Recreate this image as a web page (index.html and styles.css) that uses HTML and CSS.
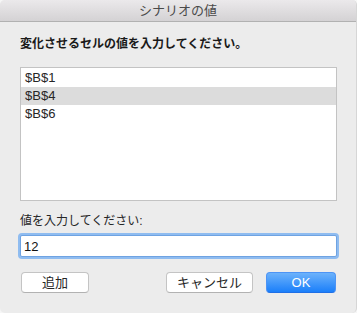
FILE: index.html
```html
<!DOCTYPE html>
<html lang="ja">
<head>
    <meta charset="UTF-8">
    <title>シナリオの値</title>
    <link rel="stylesheet" href="styles.css">
</head>
<body>
    <div class="window">
        <div class="title-bar">シナリオの値</div>

        <div class="content">
            <div class="prompt">変化させるセルの値を入力してください。</div>

            <div class="cell-list">
                <div class="cell-row">$B$1</div>
                <div class="cell-row selected">$B$4</div>
                <div class="cell-row">$B$6</div>
            </div>

            <div class="value-label">値を入力してください:</div>
            <input class="value-input" type="text" value="12">

            <div class="button-row">
                <button class="btn">追加</button>
                <div class="spacer"></div>
                <button class="btn btn-cancel">キャンセル</button>
                <button class="btn btn-ok">OK</button>
            </div>
        </div>
    </div>
</body>
</html>
```

FILE: styles.css
```css
body {
    margin: 0;
    padding: 0;
    background: #f6f6f6;
    font-family: 'Liberation Sans', 'Noto Sans CJK JP', sans-serif;
}

.window {
    width: 357px;
    height: 313px;
    background: #ececec;
    border-radius: 5px;
    overflow: hidden;
    box-sizing: border-box;
    border-right: 1px solid #d6d6d6;
}

.title-bar {
    height: 21px;
    line-height: 21px;
    text-align: center;
    font-size: 13px;
    color: #4a4a4a;
    background: linear-gradient(#ebe9eb, #d4d2d4);
    border-bottom: 1px solid #b1b1b1;
}

.content {
    padding: 0 20px;
}

.prompt {
    margin-top: 14px;
    font-size: 12px;
    line-height: 16px;
    font-weight: 700;
    color: #1a1a1a;
}

.cell-list {
    margin-top: 15px;
    width: 317px;
    height: 134px;
    box-sizing: border-box;
    border: 1px solid #c3c3c3;
    background: white;
    padding-top: 1px;
}

.cell-row {
    height: 18px;
    line-height: 18px;
    padding-left: 4px;
    font-size: 13px;
    color: #262626;
}

.cell-row.selected {
    background: #dcdcdc;
}

.value-label {
    margin-top: 12px;
    font-size: 12px;
    line-height: 16px;
    color: #262626;
}

.value-input {
    display: block;
    margin-top: 6px;
    width: 317px;
    height: 22px;
    box-sizing: border-box;
    border: 1px solid #6fa3e2;
    box-shadow: 0 0 0 2px #8fbcf0;
    border-radius: 2px;
    padding: 0 3px;
    font-family: 'Liberation Sans', sans-serif;
    font-size: 13px;
    color: #111;
    outline: none;
    background: white;
}

.button-row {
    display: flex;
    margin-top: 15px;
    padding-left: 1px;
    gap: 13px;
}

.spacer {
    flex: 1;
}

.btn {
    height: 21px;
    width: 68px;
    padding: 0;
    border: 1px solid #c4c4c4;
    border-bottom-color: #b2b2b2;
    border-radius: 4px;
    background: white;
    font-family: 'Liberation Sans', 'Noto Sans CJK JP', sans-serif;
    font-size: 13px;
    color: #262626;
    line-height: 19px;
}

.btn-cancel {
    width: 87px;
}

.btn-ok {
    width: 70px;
    color: white;
    border-color: #4d94f5;
    border-bottom-color: #1f6fe6;
    background: linear-gradient(#6cb2fb, #1b7ffa);
}
```
